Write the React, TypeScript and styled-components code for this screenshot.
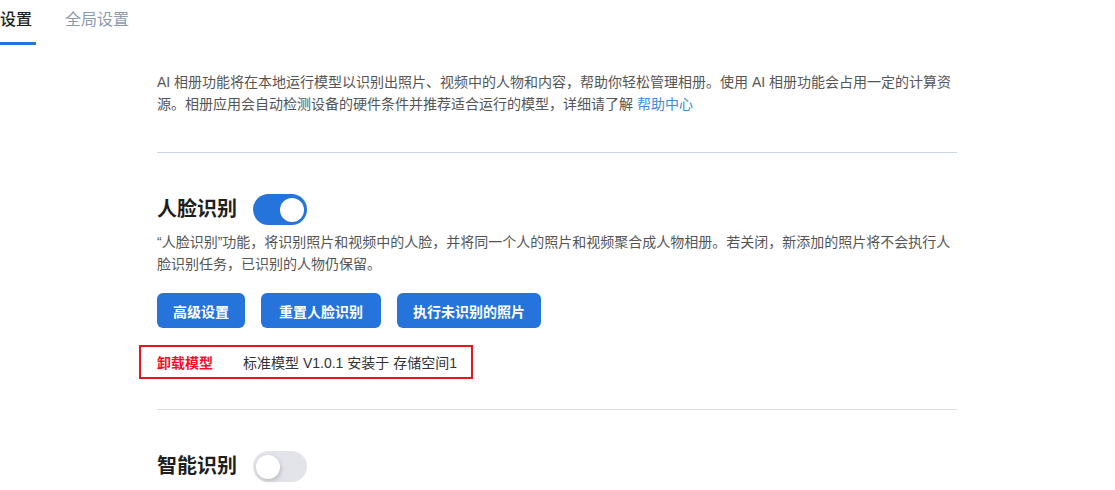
import styled, {createGlobalStyle} from "styled-components";
import {useState} from "react";

const GlobalStyle = createGlobalStyle`
    html, body {
        margin: 0;
        padding: 0;
        background: #ffffff;
        font-family: "Liberation Sans", "Noto Sans CJK SC", sans-serif;
        color: #333;
    }
`;

const Page = styled.div`
    width: 1115px;
    height: 490px;
    overflow: hidden;
`;

const TabBar = styled.nav`
    display: flex;
    gap: 29px;
    height: 45px;
`;

const Tab = styled.div<{ $active?: boolean }>`
    width: ${p => p.$active ? "36px" : "auto"};
    font-size: 16px;
    line-height: 40px;
    color: ${p => p.$active ? "#1f1f1f" : "#8c9bb0"};
    font-weight: ${p => p.$active ? 500 : 400};
    border-bottom: 3px solid ${p => p.$active ? "#2474dc" : "transparent"};
    height: 42px;
    white-space: nowrap;
`;

const Content = styled.main`
    margin-left: 157px;
    width: 800px;
    padding-top: 26px;
`;

const Paragraph = styled.p`
    margin: 0;
    font-size: 14px;
    line-height: 22px;
    color: #555;
`;

const Link = styled.a`
    color: #3d8ae2;
    text-decoration: none;
    cursor: pointer;
`;

const Divider = styled.hr<{ $tone: "blue" | "gray" }>`
    border: none;
    height: 1px;
    margin: ${p => p.$tone === "blue" ? "37px 0 41px" : "30px 0 41px"};
    background: ${p => p.$tone === "blue" ? "#c9d7e8" : "#d9dde2"};
`;

const Section = styled.section`
    display: flex;
    flex-direction: column;
`;

const HeadRow = styled.div`
    display: flex;
    align-items: center;
    gap: 16px;
    height: 31px;
`;

const Title = styled.h2`
    margin: 0;
    font-size: 20px;
    font-weight: 700;
    color: #1f1f1f;
    line-height: 31px;
`;

const Switch = styled.button<{ $on: boolean }>`
    position: relative;
    width: 54px;
    height: 31px;
    border: none;
    padding: 0;
    border-radius: 16px;
    background: ${p => p.$on ? "#2474dc" : "#e2e4e9"};
    cursor: pointer;

    &::after {
        content: "";
        position: absolute;
        top: 3.5px;
        left: ${p => p.$on ? "27px" : "3px"};
        width: 24px;
        height: 24px;
        border-radius: 50%;
        background: #fff;
        box-shadow: ${p => p.$on ? "none" : "1px 2px 4px rgba(0, 0, 0, 0.18)"};
    }
`;

const Description = styled(Paragraph)`
    margin-top: 6px;
`;

const Buttons = styled.div`
    display: flex;
    gap: 16px;
    margin-top: 18px;
`;

const Button = styled.button<{ $pad?: number }>`
    height: 35px;
    padding: 0 ${p => p.$pad ?? 16}px;
    border: none;
    border-radius: 6px;
    background: #2474dc;
    color: #fff;
    font-family: inherit;
    font-size: 14px;
    font-weight: 700;
    cursor: pointer;
`;

const ModelRow = styled.div`
    display: flex;
    align-items: center;
    gap: 30px;
    width: 334px;
    height: 34px;
    margin: 17px 0 0 -18px;
    padding: 0 16px;
    box-sizing: border-box;
    border: 2px solid #e8141f;
    font-size: 14px;
    white-space: nowrap;

    > span {
        flex-shrink: 0;
    }
`;

const Uninstall = styled.span`
    color: #f5102a;
    font-weight: 700;
`;

const ModelInfo = styled.span`
    color: #333;
`;

export default function App() {
    const [face, setFace] = useState(true);
    const [smart, setSmart] = useState(false);

    return (
        <Page>
            <GlobalStyle/>
            <TabBar>
                <Tab $active>设置</Tab>
                <Tab>全局设置</Tab>
            </TabBar>
            <Content>
                <Paragraph>
                    AI 相册功能将在本地运行模型以识别出照片、视频中的人物和内容，帮助你轻松管理相册。使用 AI 相册功能会占用一定的计算资源。相册应用会自动检测设备的硬件条件并推荐适合运行的模型，详细请了解 <Link>帮助中心</Link>
                </Paragraph>
                <Divider $tone="blue"/>
                <Section>
                    <HeadRow>
                        <Title>人脸识别</Title>
                        <Switch $on={face} onClick={() => setFace(!face)}/>
                    </HeadRow>
                    <Description>
                        “人脸识别”功能，将识别照片和视频中的人脸，并将同一个人的照片和视频聚合成人物相册。若关闭，新添加的照片将不会执行人脸识别任务，已识别的人物仍保留。
                    </Description>
                    <Buttons>
                        <Button>高级设置</Button>
                        <Button $pad={18}>重置人脸识别</Button>
                        <Button>执行未识别的照片</Button>
                    </Buttons>
                    <ModelRow>
                        <Uninstall>卸载模型</Uninstall>
                        <ModelInfo>标准模型 V1.0.1 安装于 存储空间1</ModelInfo>
                    </ModelRow>
                </Section>
                <Divider $tone="gray"/>
                <Section>
                    <HeadRow>
                        <Title>智能识别</Title>
                        <Switch $on={smart} onClick={() => setSmart(!smart)}/>
                    </HeadRow>
                </Section>
            </Content>
        </Page>
    );
}
